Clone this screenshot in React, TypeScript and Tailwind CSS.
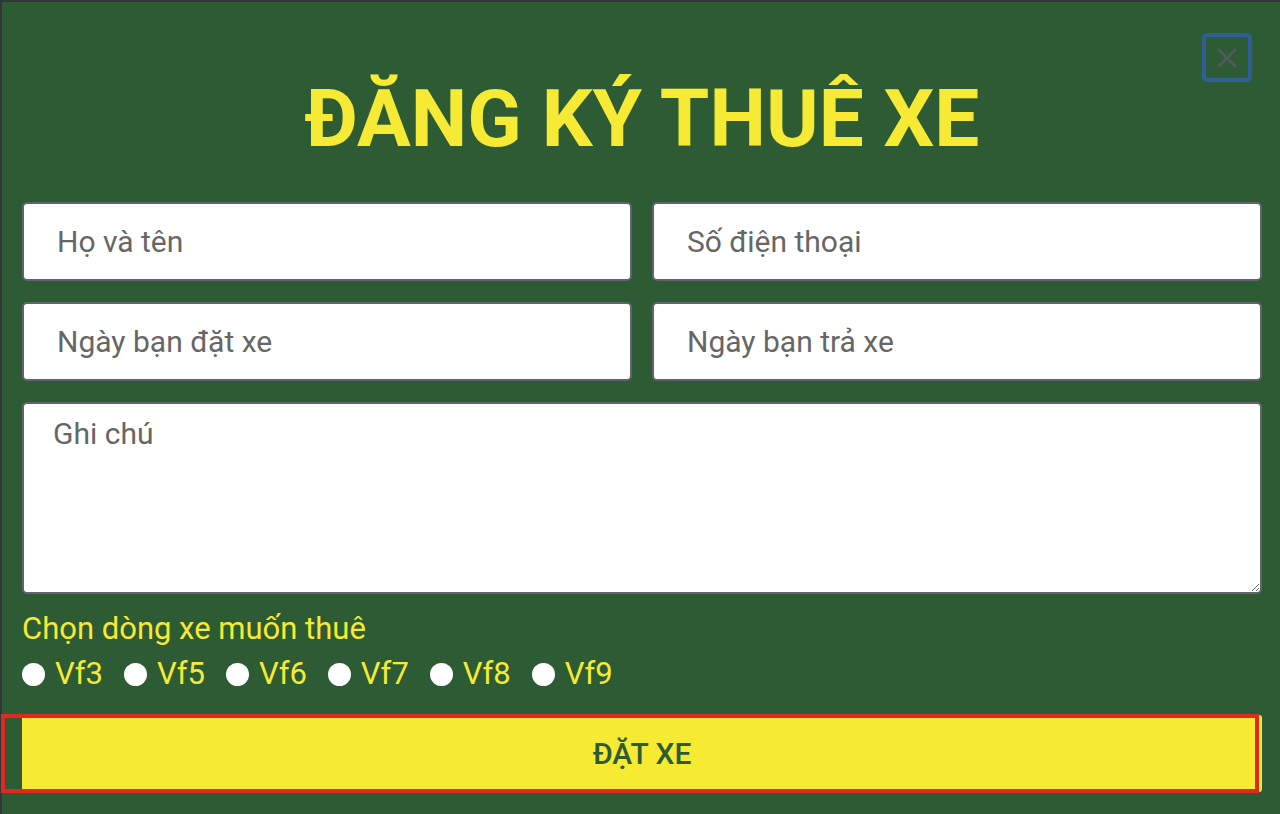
import { useState } from 'react'

const MODELS = ['Vf3', 'Vf5', 'Vf6', 'Vf7', 'Vf8', 'Vf9']

const field =
  'h-[79px] w-full rounded-[5px] border-2 border-[#62636f] bg-white px-[33px] text-[30px] text-[#333] placeholder:text-[#666] outline-none'

export default function App() {
  const [model, setModel] = useState('')

  return (
    <div
      className="relative min-h-[814px] border-l-2 border-t-2 border-[#353438] bg-[#2d5c34] pl-[20px] pr-[18px]"
      style={{ fontFamily: 'Roboto, "Noto Sans", sans-serif' }}
    >
      <button className="absolute right-[28px] top-[31px] flex h-[49px] w-[50px] items-center justify-center rounded-[5px] border-[4px] border-[#2f5e98]">
        <svg width="22" height="22" viewBox="0 0 22 22" stroke="#4f5a5e" strokeWidth="3" strokeLinecap="round">
          <path d="M3 3l16 16M19 3L3 19" />
        </svg>
      </button>

      <h1 className="pt-[72px] pb-[38px] text-center text-[80px] font-bold leading-[90px] text-[#f7ea35]">
        ĐĂNG KÝ THUÊ XE
      </h1>

      <form className="flex flex-col" onSubmit={(e) => e.preventDefault()}>
        <div className="grid grid-cols-2 gap-x-[20px] gap-y-[21px]">
          <input className={field} placeholder="Họ và tên" />
          <input className={field} placeholder="Số điện thoại" />
          <input className={field} placeholder="Ngày bạn đặt xe" />
          <input className={field} placeholder="Ngày bạn trả xe" />
        </div>

        <textarea
          className="mt-[21px] h-[192px] w-full rounded-[5px] border-2 border-[#62636f] bg-white px-[29px] py-[12px] text-[30px] leading-[36px] text-[#333] placeholder:text-[#666] outline-none"
          placeholder="Ghi chú"
        />

        <p className="mt-[15px] text-[31px] leading-[40px] text-[#f7ea35]">Chọn dòng xe muốn thuê</p>

        <div className="mt-[5px] flex items-center gap-[21px]">
          {MODELS.map((m) => (
            <label key={m} className="flex cursor-pointer items-center gap-[10px] text-[31px] leading-[40px] text-[#f7ea35]">
              <span className="flex h-[23px] w-[23px] items-center justify-center rounded-full bg-white">
                {model === m && <span className="h-[11px] w-[11px] rounded-full bg-[#2d5c34]" />}
              </span>
              <input type="radio" name="model" className="hidden" checked={model === m} onChange={() => setModel(m)} />
              {m}
            </label>
          ))}
        </div>

        <div className="relative mt-[21px]">
          <button
            type="submit"
            className="h-[77px] w-full rounded-[3px] bg-[#f6ea33] text-[30px] font-medium text-[#2d5c34]"
          >
            ĐẶT XE
          </button>
          <span className="pointer-events-none absolute -bottom-[1px] -left-[21px] -top-[1px] right-[3px] border-[4px] border-[#e0291f]" />
        </div>
      </form>
    </div>
  )
}
